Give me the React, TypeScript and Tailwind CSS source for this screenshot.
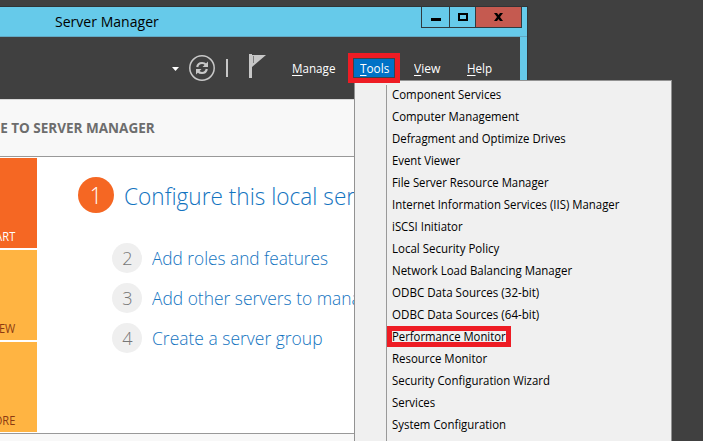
import React from "react";

const menuItems: { label: string; width: string }[] = [
  { label: "Component Services", width: "w-[109px]" },
  { label: "Computer Management", width: "w-[127px]" },
  { label: "Defragment and Optimize Drives", width: "w-[174px]" },
  { label: "Event Viewer", width: "w-[68px]" },
  { label: "File Server Resource Manager", width: "w-[157px]" },
  { label: "Internet Information Services (IIS) Manager", width: "w-[227px]" },
  { label: "iSCSI Initiator", width: "w-[71px]" },
  { label: "Local Security Policy", width: "w-[107px]" },
  { label: "Network Load Balancing Manager", width: "w-[180px]" },
  { label: "ODBC Data Sources (32-bit)", width: "w-[147px]" },
  { label: "ODBC Data Sources (64-bit)", width: "w-[147px]" },
  { label: "Performance Monitor", width: "w-[114px]" },
  { label: "Resource Monitor", width: "w-[95px]" },
  { label: "Security Configuration Wizard", width: "w-[158px]" },
  { label: "Services", width: "w-[43px]" },
  { label: "System Configuration", width: "w-[114px]" },
];

const steps = [
  { n: 2, label: "Add roles and features", width: "w-[176px]" },
  { n: 3, label: "Add other servers to manage", width: "w-[227px]" },
  { n: 4, label: "Create a server group", width: "w-[171px]" },
];

const tiles = [
  { label: "QUICK START", color: "bg-[#f56723] text-white" },
  { label: "WHAT'S NEW", color: "bg-[#ffb442] text-[#8b3a12]" },
  { label: "LEARN MORE", color: "bg-[#ffb442] text-[#8b3a12]" },
];

/* One line of text, condensed horizontally to fill the width of its box. */
function Fit({ width, children }: { width: string; children: React.ReactNode }) {
  const box = React.useRef<HTMLSpanElement>(null);
  const text = React.useRef<HTMLSpanElement>(null);
  const [scale, setScale] = React.useState(1);
  React.useLayoutEffect(() => {
    if (box.current && text.current) setScale(box.current.offsetWidth / text.current.offsetWidth);
  }, []);
  return (
    <span ref={box} className={`block shrink-0 whitespace-nowrap ${width}`}>
      <span ref={text} className="inline-block origin-left" style={{ transform: `scaleX(${scale})` }}>
        {children}
      </span>
    </span>
  );
}

function MenuButton({ label, width }: { label: string; width: string }) {
  return (
    <Fit width={width}>
      <span className="underline decoration-1 underline-offset-2">{label[0]}</span>
      {label.slice(1)}
    </Fit>
  );
}

function TitleBar() {
  return (
    <div className="flex h-[30px] justify-between border-b border-[#62a9c4] bg-[#66caea]">
      <div className="flex h-[29px] items-center pl-[55px] text-[15px] leading-[29px] text-black">
        <Fit width="w-[104px]">Server Manager</Fit>
      </div>
      <div className="mr-[5px] flex h-[21px] w-[101px] border-x border-b border-[#2f3b40]">
        <div className="flex w-[27px] justify-center pt-[11px]">
          <div className="h-[3px] w-[10px] bg-black" />
        </div>
        <div className="flex w-[26px] justify-center border-l border-[#2f3b40] pt-[6px]">
          <div className="h-[8px] w-[10px] border-2 border-black" />
        </div>
        <div className="flex flex-1 justify-center border-l border-[#2f3b40] bg-[#c55a50] pt-[6px]">
          <svg width="9" height="8" viewBox="0 0 9 8">
            <path d="M0 0H3L4.5 2L6 0H9L6 4L9 8H6L4.5 6L3 8H0L3 4Z" fill="#000" />
          </svg>
        </div>
      </div>
    </div>
  );
}

function Toolbar() {
  return (
    <div className="flex h-[62px] bg-[#404040] text-white">
      <svg className="shrink-0" width="292" height="62" viewBox="0 0 292 62">
        <path d="M172 30H179L175.500 34Z" fill="#fff" />
        <circle cx="202" cy="31" r="12.200" fill="none" stroke="#c8c8c8" strokeWidth="1.500" />
        <g fill="none" stroke="#c8c8c8" strokeWidth="2.200">
          <path d="M197.200 30Q198 26 202 26Q204.500 26 206 27.800" />
          <path d="M206.800 32Q206 36 202 36Q199.500 36 198 34.200" />
        </g>
        <path d="M208 24.500V30H202.500ZM196 37.500V32H201.500Z" fill="#c8c8c8" />
        <path d="M226 22H228V40H226Z" fill="#c8c8c8" />
        <path d="M249 17H252V41H249ZM252 18H266L252 30Z" fill="#c8c8c8" />
        <path d="M253.500 19V26" stroke="#808080" strokeWidth="1" />
      </svg>
      <div className="flex pt-[21px] text-[13px] leading-[20px]">
        <MenuButton label="Manage" width="w-[43px]" />
        <div className="ml-[18px] flex h-[20px] w-[42px] border border-[#39434c] bg-[#0072c6] pl-[6px] leading-[18px]">
          <MenuButton label="Tools" width="w-[29px]" />
        </div>
        <div className="ml-[19px]">
          <MenuButton label="View" width="w-[26px]" />
        </div>
        <div className="ml-[27px]">
          <MenuButton label="Help" width="w-[25px]" />
        </div>
      </div>
    </div>
  );
}

function Welcome() {
  return (
    <div className="flex h-[278px] border-y border-[#999] bg-white pt-px">
      <div className="flex w-[37px] flex-col gap-[2px] overflow-hidden">
        {tiles.map((t) => (
          <div key={t.label} className={`flex h-[90px] shrink-0 items-end justify-end pr-[22px] pb-[2px] text-[12px] leading-[18px] whitespace-nowrap ${t.color}`}>
            <span className="origin-right scale-x-[0.92]">{t.label}</span>
          </div>
        ))}
      </div>
      <div className="pt-[19px] pl-[41px] font-light text-[#1374bf]">
        <div className="flex h-9 items-center gap-[10px]">
          <div className="flex size-9 items-center justify-center rounded-full bg-[#f56723] text-[24px] text-white">
            <span className="scale-x-90">1</span>
          </div>
          <div className="pt-[2px] text-[24px] leading-9">
            <Fit width="w-[263px]">Configure this local server</Fit>
          </div>
        </div>
        <div className="flex flex-col gap-[10px] pt-[30px] pl-[34px]">
          {steps.map((s) => (
            <div key={s.n} className="flex h-[30px] items-center gap-[10px]">
              <div className="flex size-[30px] items-center justify-center rounded-full bg-[#efefef] text-[19px] text-[#777]">
                <span className="scale-x-95">{s.n}</span>
              </div>
              <div className="text-[19px] leading-[30px]">
                <Fit width={s.width}>{s.label}</Fit>
              </div>
            </div>
          ))}
        </div>
      </div>
    </div>
  );
}

function ToolsMenu() {
  return (
    <div className="absolute top-[80px] left-[354px] flex h-[361px] w-[318px] border-t border-r border-l border-[#929292] bg-[#f0f0f0] text-[13px] text-black">
      <div className="mt-[4px] ml-[31px] w-px bg-[#999]" />
      <div className="pt-[2px] pl-[5px]">
        {menuItems.map((m) => (
          <div key={m.label} className="h-[22px] leading-[22px]">
            <Fit width={m.width}>{m.label}</Fit>
          </div>
        ))}
      </div>
    </div>
  );
}

export default function App() {
  return (
    <div className="relative h-[441px] w-[703px] overflow-hidden bg-[#404040] font-['Open_Sans','Noto_Sans',sans-serif]">
      <div className="pt-[6px]">
        <div className="h-[435px] w-[528px] overflow-hidden border-t border-r border-[#303436] bg-[#66caea]">
          <TitleBar />
          <div className="h-[404px] w-[520px] overflow-hidden bg-[#f8f8f8]">
            <Toolbar />
            <div className="flex h-[57px] items-center overflow-hidden border-t border-[#d8d8d8] pb-[2px] text-[14px] font-bold text-[#6d6d6d]">
              <div className="flex w-[155px] shrink-0 justify-end whitespace-nowrap">
                <span className="origin-right scale-x-[0.965]">WELCOME TO SERVER MANAGER</span>
              </div>
            </div>
            <Welcome />
          </div>
        </div>
      </div>
      <ToolsMenu />
      <div className="absolute top-[53px] left-[348px] h-[30px] w-[52px] border-[5px] border-[#ee1c24]" />
      <div className="absolute top-[326px] left-[387px] h-[21px] w-[124px] border-[5px] border-[#ee1c24]" />
    </div>
  );
}
